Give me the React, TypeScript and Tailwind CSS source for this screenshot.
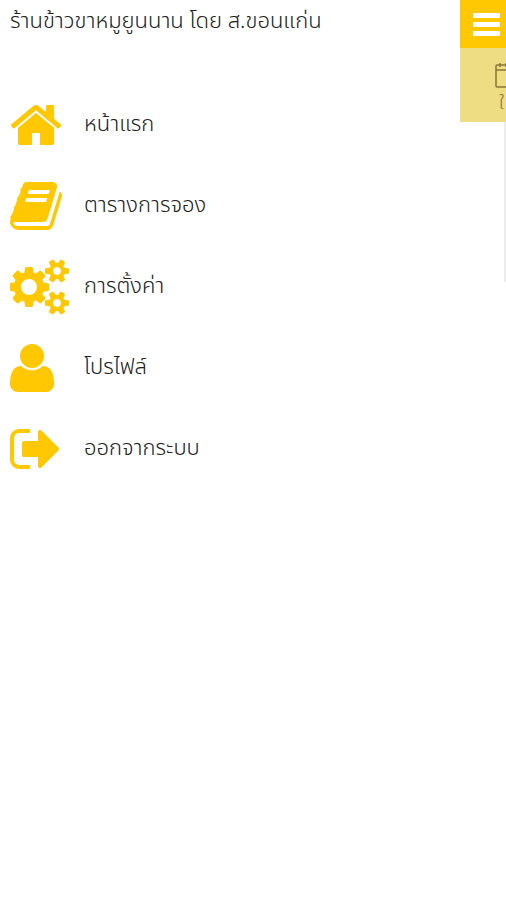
import type { ReactNode } from 'react';

type MenuItem = {
  label: string;
  href: string;
  icon: ReactNode;
};

const menuItems: MenuItem[] = [
  {
    label: 'หน้าแรก',
    href: '#home',
    icon: (
      <svg className="h-14 w-[52px]" viewBox="64 0 1664 1792" fill="currentColor" aria-hidden="true">
        <path d="M1472 992v480q0 26-19 45t-45 19h-384v-384h-256v384h-384q-26 0-45-19t-19-45v-480q0-1 .5-3t.5-3l575-474 575 474q1 2 1 6zm223-69l-62 74q-8 9-21 11h-3q-13 0-21-7l-692-577-692 577q-12 8-24 7-13-2-21-11l-62-74q-8-10-7-23.5t11-21.5l719-599q32-26 76-26t76 26l244 204v-195q0-14 9-23t23-9h192q14 0 23 9t9 23v408l219 182q10 8 11 21.5t-7 23.5z" />
      </svg>
    ),
  },
  {
    label: 'ตารางการจอง',
    href: '#bookings',
    icon: (
      <svg className="h-14 w-[52px]" viewBox="64 0 1664 1792" fill="currentColor" aria-hidden="true">
        <path d="M1703 478q40 57 18 129l-275 906q-19 64-76.5 107.5t-122.5 43.5h-923q-77 0-148.5-53.5t-99.5-131.5q-24-67-2-127 0-4 3-27t4-37q1-8-3-21.5t-3-19.5q2-11 8-21t16.5-23.5 16.5-23.5q23-38 45-91.5t30-91.5q3-10 .5-30t-.5-28q3-11 17-28t17-23q21-36 42-92t25-90q1-9-2.5-32t.5-28q4-13 22-30.5t22-22.5q19-26 42.5-84.5t27.5-96.5q1-8-3-25.5t-2-26.5q2-8 9-18t18-23 17-21q8-12 16.5-30.5t15-35 16-36 19.5-32 26.5-23.5 36-11.5 47.5 5.5l-1 3q38-9 51-9h761q74 0 114 56t18 130l-274 906q-36 119-71.5 153.5t-128.5 34.5h-869q-27 0-38 15-11 16-1 43 24 70 144 70h923q29 0 56-15.5t35-41.5l300-987q7-22 5-57 38 15 59 43zm-1064 2q-4 13 2 22.5t20 9.5h608q13 0 25.5-9.5t16.5-22.5l21-64q4-13-2-22.5t-20-9.5h-608q-13 0-25.5 9.5t-16.5 22.5zm-83 256q-4 13 2 22.5t20 9.5h608q13 0 25.5-9.5t16.5-22.5l21-64q4-13-2-22.5t-20-9.5h-608q-13 0-25.5 9.5t-16.5 22.5z" />
      </svg>
    ),
  },
  {
    label: 'การตั้งค่า',
    href: '#settings',
    icon: (
      <svg className="h-14 w-[60px]" viewBox="-32 0 1920 1792" fill="currentColor" aria-hidden="true">
        <path d="M832 896q0-106-75-181t-181-75-181 75-75 181 75 181 181 75 181-75 75-181zm768 512q0-52-38-90t-90-38-90 38-38 90q0 53 37.5 90.5t90.5 37.5 90.5-37.5 37.5-90.5zm0-1024q0-52-38-90t-90-38-90 38-38 90q0 53 37.5 90.5t90.5 37.5 90.5-37.5 37.5-90.5zm-384 421v185q0 10-7 19.5t-16 10.5l-155 24q-11 35-32 76 34 48 90 115 7 11 7 20 0 12-7 19-23 30-82.5 89.5t-78.5 59.5q-11 0-21-7l-115-90q-37 19-77 31-11 108-23 155-7 24-30 24h-186q-11 0-20-7.5t-10-17.5l-23-153q-34-10-75-31l-118 89q-7 7-20 7-11 0-21-8-144-133-144-160 0-9 7-19 10-14 41-53t47-61q-23-44-35-82l-152-24q-10-1-17-9.5t-7-19.5v-185q0-10 7-19.5t16-10.5l155-24q11-35 32-76-34-48-90-115-7-11-7-20 0-12 7-20 22-30 82-89t79-59q11 0 21 7l115 90q34-18 77-32 11-108 23-154 7-24 30-24h186q11 0 20 7.5t10 17.5l23 153q34 10 75 31l118-89q8-7 20-7 11 0 21 8 144 133 144 160 0 8-7 19-12 16-42 54t-45 60q23 48 34 82l152 23q10 2 17 10.5t7 19.5zm640 533v140q0 16-149 31-12 27-30 52 51 113 51 138 0 4-4 7-122 71-124 71-8 0-46-47t-52-68q-20 2-30 2t-30-2q-14 21-52 68t-46 47q-2 0-124-71-4-3-4-7 0-25 51-138-18-25-30-52-149-15-149-31v-140q0-16 149-31 13-29 30-52-51-113-51-138 0-4 4-7 4-2 35-20t59-34 30-16q8 0 46 46.5t52 67.5q20-2 30-2t30 2q51-71 92-112l6-2q4 0 124 70 4 3 4 7 0 25-51 138 17 23 30 52 149 15 149 31zm0-1024v140q0 16-149 31-12 27-30 52 51 113 51 138 0 4-4 7-122 71-124 71-8 0-46-47t-52-68q-20 2-30 2t-30-2q-14 21-52 68t-46 47q-2 0-124-71-4-3-4-7 0-25 51-138-18-25-30-52-149-15-149-31v-140q0-16 149-31 13-29 30-52-51-113-51-138 0-4 4-7 4-2 35-20t59-34 30-16q8 0 46 46.5t52 67.5q20-2 30-2t30 2q51-71 92-112l6-2q4 0 124 70 4 3 4 7 0 25-51 138 17 23 30 52 149 15 149 31z" />
      </svg>
    ),
  },
  {
    label: 'โปรไฟล์',
    href: '#profile',
    icon: (
      <svg className="h-14 w-11" viewBox="192 0 1408 1792" fill="currentColor" aria-hidden="true">
        <path d="M1600 1405q0 120-73 189.5t-194 69.5h-874q-121 0-194-69.5t-73-189.5q0-53 3.5-103.5t14-109 26.5-108.5 43-97.5 62-81 85.5-53.5 111.5-20q9 0 42 21.5t74.5 48 108 48 133.5 21.5 133.5-21.5 108-48 74.5-48 42-21.5q61 0 111.5 20t85.5 53.5 62 81 43 97.5 26.5 108.5 14 109 3.5 103.5zm-320-893q0 159-112.5 271.5t-271.5 112.5-271.5-112.5-112.5-271.5 112.5-271.5 271.5-112.5 271.5 112.5 112.5 271.5z" />
      </svg>
    ),
  },
  {
    label: 'ออกจากระบบ',
    href: '#logout',
    icon: (
      <svg className="h-14 w-[52px]" viewBox="64 0 1664 1792" fill="currentColor" aria-hidden="true">
        <path d="M704 1440q0 4 1 20t.5 26.5-3 23.5-10 19.5-20.5 6.5h-320q-119 0-203.5-84.5t-84.5-203.5v-704q0-119 84.5-203.5t203.5-84.5h320q13 0 22.5 9.5t9.5 22.5q0 4 1 20t.5 26.5-3 23.5-10 19.5-20.5 6.5h-320q-66 0-113 47t-47 113v704q0 66 47 113t113 47h312l11.5 1 11.5 3 8 5.5 7 9 2 13.5zm928-544q0 26-19 45l-544 544q-19 19-45 19t-45-19-19-45v-288h-448q-26 0-45-19t-19-45v-384q0-26 19-45t45-19h448v-288q0-26 19-45t45-19 45 19l544 544q19 19 19 45z" />
      </svg>
    ),
  },
];

// Booking screen that stays visible behind the open drawer
function PageEdge() {
  return (
    <main className="w-[46px] shrink-0 overflow-hidden">
      <button type="button" aria-label="เมนู" className="flex h-12 w-full items-center justify-center bg-[#ffc800] pl-2 text-white">
        <svg className="h-6 w-7" viewBox="0 0 28 24" fill="currentColor" aria-hidden="true">
          <rect x="0" y="1" width="27" height="5" rx="1" />
          <rect x="0" y="10" width="27" height="5" rx="1" />
          <rect x="0" y="19" width="27" height="5" rx="1" />
        </svg>
      </button>
      <div className="flex h-[74px] w-24 flex-col items-start bg-[#eedd82] pt-3 pl-[35px] text-[#8a7434]">
        <svg className="h-8 w-8" viewBox="0 0 32 32" fill="none" stroke="currentColor" strokeWidth="1.5" aria-hidden="true">
          <rect x="1" y="5" width="28" height="22" rx="1" />
          <path d="M1 10h28M5 3v4M11 3v4M19 3v4M25 3v4" />
        </svg>
        <span className="pl-1 text-lg leading-6 font-light">ใ</span>
      </div>
      <div className="ml-auto h-40 w-0.5 bg-[#ececec]" />
    </main>
  );
}

export default function App() {
  return (
    <div className="flex min-h-screen overflow-hidden bg-white font-['Noto_Sans_Thai','Open_Sans',sans-serif] text-[#222]">
      <aside className="min-w-0 flex-1">
        <h1 className="px-2.5 pt-2 text-[22px] leading-7 font-light">ร้านข้าวขาหมูยูนนาน โดย ส.ขอนแก่น</h1>
        <nav className="mt-[61px]">
          <ul className="flex flex-col gap-[25px]">
            {menuItems.map((item) => (
              <li key={item.href}>
                <a href={item.href} className="flex h-14 items-center px-2.5 text-[22px] leading-7 font-light">
                  <span className="w-[74px] shrink-0 text-[#ffc800]">{item.icon}</span>
                  {item.label}
                </a>
              </li>
            ))}
          </ul>
        </nav>
      </aside>
      <PageEdge />
    </div>
  );
}
